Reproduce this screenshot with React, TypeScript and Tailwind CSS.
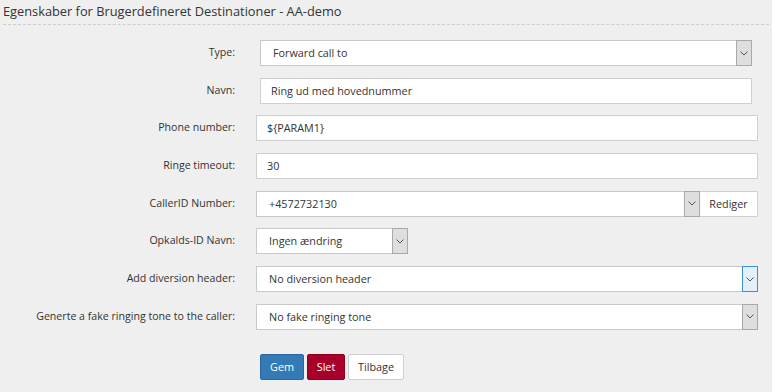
import React from 'react';

const font = { fontFamily: '"Open Sans", "Noto Sans", sans-serif' };

function Chevron() {
  return (
    <svg width="8" height="5" viewBox="0 0 8 5" fill="none">
      <path d="M0.5 0.5 L4 4 L7.5 0.5" stroke="#555" strokeWidth="1" />
    </svg>
  );
}

function SelectBox({ value, focused = false, className = '' }: { value: string; focused?: boolean; className?: string }) {
  return (
    <div className={`flex h-[26px] border border-[#c9c9c9] bg-white ${className}`}>
      <div className="flex flex-1 items-center pl-[12px] text-[10.8px] text-[#333]">{value}</div>
      <div
        className={`flex w-[16px] items-center justify-center border ${
          focused ? 'border-[#3c8ed8] bg-[#e3f0fb]' : 'border-[#a9a9a9] bg-[#dedede]'
        } -my-px -mr-px`}
      >
        <Chevron />
      </div>
    </div>
  );
}

function TextBox({ value, className = '' }: { value: string; className?: string }) {
  return (
    <div className={`flex h-[26px] items-center border border-[#cfcfcf] bg-white pl-[10px] text-[10.8px] text-[#333] ${className}`}>
      {value}
    </div>
  );
}

function Row({ label, children }: { label: string; children: React.ReactNode }) {
  return (
    <div className="flex items-center">
      <div className="w-[235px] shrink-0 text-right text-[10.6px] text-[#333]">{label}</div>
      <div className="flex flex-1 pl-[21px]">{children}</div>
    </div>
  );
}

export default function App() {
  return (
    <div className="flex h-[392px] w-[774px] bg-white" style={font}>
      <div className="flex w-[772px] flex-col bg-[#efefef]">
        <div className="px-[3px] pt-[1px] text-[12.8px] leading-[20px] text-[#333]">
          Egenskaber for Brugerdefineret Destinationer - AA-demo
        </div>
        <div className="mx-[3px] mt-[3px] border-t border-dashed border-[#cdcdcd]" />

        <div className="mt-[15px] flex flex-col gap-[11.7px] pr-[14px]">
          <Row label="Type:">
            <SelectBox value="Forward call to" className="ml-[4px] mr-[6px] flex-1" />
          </Row>
          <Row label="Navn:">
            <TextBox value="Ring ud med hovednummer" className="ml-[4px] mr-[6px] flex-1" />
          </Row>
          <Row label="Phone number:">
            <TextBox value="${PARAM1}" className="flex-1" />
          </Row>
          <Row label="Ringe timeout:">
            <TextBox value="30" className="flex-1" />
          </Row>
          <Row label="CallerID Number:">
            <SelectBox value="+4572732130" className="flex-1" />
            <button className="h-[26px] w-[58px] rounded-r-[2px] border border-l-0 border-[#cfcfcf] bg-white text-[10.8px] text-[#333]">
              Rediger
            </button>
          </Row>
          <Row label="Opkalds-ID Navn:">
            <SelectBox value="Ingen ændring" className="w-[152px]" />
          </Row>
          <Row label="Add diversion header:">
            <SelectBox value="No diversion header" focused className="flex-1" />
          </Row>
          <Row label="Generte a fake ringing tone to the caller:">
            <SelectBox value="No fake ringing tone" className="flex-1" />
          </Row>
        </div>

        <div className="mt-[24px] flex gap-[3px] pl-[260px]">
          <button className="h-[26px] w-[44px] rounded-[2px] border border-[#2b679e] bg-[#337ab7] text-[10.8px] text-white">
            Gem
          </button>
          <button className="h-[26px] w-[38px] rounded-[2px] border border-[#8e0020] bg-[#a8002a] text-[10.8px] text-white">
            Slet
          </button>
          <button className="h-[26px] w-[56px] rounded-[2px] border border-[#cfcfcf] bg-white text-[10.8px] text-[#333]">
            Tilbage
          </button>
        </div>
      </div>
    </div>
  );
}
